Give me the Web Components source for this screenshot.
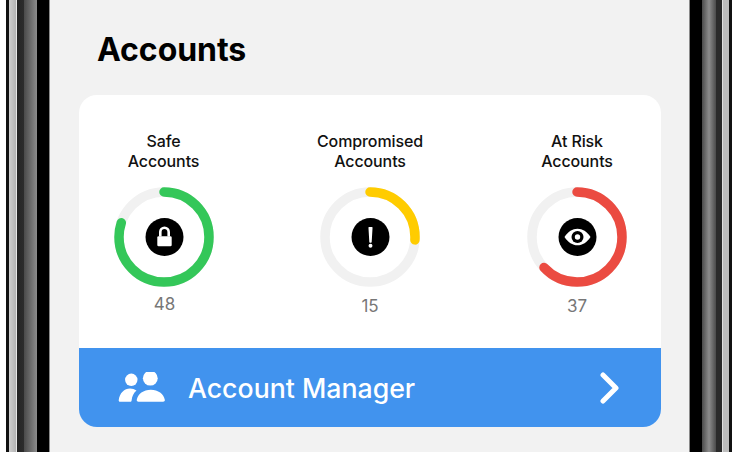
<!DOCTYPE html>
<html><head><meta charset="utf-8"><style>
html,body{margin:0;padding:0;width:740px;height:452px;overflow:hidden;background:#fff}
body{font-family:Inter,"Liberation Sans",sans-serif}
</style></head><body>
<phone-frame>
  <h-title>Accounts</h-title>
  <accounts-card>
    <stat-ring label-a="Safe" label-b="Accounts" value="48" pct="0.80" color="#34c759" icon="lock" style="--shift:-2px;--vx:2px"></stat-ring>
    <stat-ring label-a="Compromised" label-b="Accounts" value="15" pct="0.26" color="#ffcc00" icon="alert"></stat-ring>
    <stat-ring label-a="At Risk" label-b="Accounts" value="37" pct="0.63" color="#eb4b41" icon="eye" style="padding-left:1px"></stat-ring>
    <manager-bar slot="bar">Account Manager</manager-bar>
  </accounts-card>
</phone-frame>
<script>
function def(name, html, init){
  customElements.define(name, class extends HTMLElement{
    constructor(){super();this.attachShadow({mode:'open'}).innerHTML=html;}
    connectedCallback(){init&&init(this)}
  });
}
def('phone-frame',`<style>
:host{display:flex;width:740px;height:452px;overflow:hidden}
.l,.r{flex:none;height:100%}
.l{width:50px;background:linear-gradient(90deg,#fff 0 6px,#111 6px 9px,#d0d0d0 9px,#b4b4b4 16px,#e8e8e8 16px 17px,#252525 17px,#2c2c2c 24px,#4a4a4a 24px,#8c8c8c 37px,#000 37px 49px,#8a8a8a 49px 50px)}
.r{width:51px;background:linear-gradient(90deg,#8a8a8a 0 1px,#000 1px 13px,#4a4a4a 13px,#8c8c8c 20px,#4a4a4a 27px,#2a2a2a 27px 33px,#e0e0e0 33px 34px,#bdbdbd 34px 40px,#111 40px 43px,#fff 43px)}
.s{flex:1;min-width:0;background:#f2f2f2;padding:0 28px 0 29px;display:flex;flex-direction:column}
</style><div class="l"></div><div class="s"><slot></slot></div><div class="r"></div>`);
def('h-title',`<style>
:host{display:block;font:700 32px/38px Inter,"Liberation Sans",sans-serif;color:#000;padding:31px 0 26px 18px;letter-spacing:-.06px}
</style><slot></slot>`);
def('accounts-card',`<style>
:host{display:block;background:#fff;border-radius:18px;overflow:hidden;height:332px}
.g{display:grid;grid-template-columns:169px 244px 169px;height:253px}
</style><div class="g"><slot></slot></div><slot name="bar"></slot>`);
const ICONS={
 lock:`<path d="M-4.200-.5v-4.600a4.200 4.200 0 0 1 8.400 0v4.600" fill="none" stroke="#fff" stroke-width="2.600"/><rect x="-7.200" y="-.7" width="14.400" height="10" rx="1.300" fill="#fff"/>`,
 alert:`<path d="M-1.500-9.900h3q.6 0 .55.6l-.85 14.400q-.05.6-.7.6h-.99q-.65 0-.7-.6l-.85-14.400q-.05-.6.55-.6z" fill="#fff"/><circle cy="8.800" r="1.950" fill="#fff"/>`,
 eye:`<path d="M-13 0C-9.500-5.500-5-8.300 0-8.300S9.500-5.500 13 0C9.500 5.500 5 8.300 0 8.300S-9.500 5.500-13 0z" fill="#fff"/><circle r="6" fill="#000"/><circle r="2.700" fill="#fff"/>`
};
customElements.define('stat-ring',class extends HTMLElement{
  constructor(){super();this.attachShadow({mode:'open'});}
  connectedCallback(){
    const a=k=>this.getAttribute(k),r=45,c=2*Math.PI*r,p=+a('pct');
    this.shadowRoot.innerHTML=`<style>
:host{display:flex;flex-direction:column;align-items:center;padding-top:36px}
.t{font:500 16px/20px Inter,"Liberation Sans",sans-serif;color:#111;text-align:center;letter-spacing:-.1px;margin-top:-.5px}
svg{display:block;margin-top:16px;margin-bottom:0}
.v{font:400 17px/20px Inter,"Liberation Sans",sans-serif;color:#777;margin-top:calc(9px + var(--shift,0px));padding-left:var(--vx,0px)}
</style><div class="t">${a('label-a')}<br>${a('label-b')}</div>
<svg width="100" height="100" viewBox="-50 -50 100 100">
<circle r="${r}" fill="none" stroke="#f1f1f1" stroke-width="9.500"/>
<circle r="${r}" fill="none" stroke="${a('color')}" stroke-width="9.500" stroke-linecap="round" stroke-dasharray="${c*p} ${c}" transform="rotate(-90)"/>
<g transform="translate(.5 0)"><circle r="19" fill="#000"/>${ICONS[a('icon')]}</g>
</svg><div class="v">${a('value')}</div>`;
  }
});
def('manager-bar',`<style>
:host{display:flex;align-items:center;height:79px;background:#4193ee;color:#fff;font:500 26.700px/32px Inter,"Liberation Sans",sans-serif;padding:0 40px 0 39px;box-sizing:border-box}
.i{flex:none;display:block;margin-right:23px}
.x{flex:1}
.c{flex:none;display:block}
</style>
<svg class="i" width="47" height="32" viewBox="0 0 47 32" fill="#fff">
<circle cx="13.300" cy="7.800" r="6.200"/><circle cx="32.300" cy="6.200" r="7.400"/>
<path d="M.7 28.300C1.500 21 6.500 16.500 12 16.500c2.500 0 4.500.7 6.500 2C15.500 21 14 24.500 13.600 28.500c-.1.800-.5 1.300-1.300 1.300H2c-.9 0-1.400-.6-1.300-1.500z"/>
<path d="M20.500 29.800c-1.300 0-2-.8-1.700-2C19.800 22 25.500 17.800 32.800 17.800S45.800 22 46.800 27.800c.3 1.200-.4 2-1.700 2z"/>
</svg><span class="x"><slot></slot></span>
<svg class="c" width="22" height="32" viewBox="0 0 22 32"><path d="M4 3l13 13L4 29" fill="none" stroke="#fff" stroke-width="5" stroke-linecap="round" stroke-linejoin="round"/></svg>`);
</script>
</body></html>
